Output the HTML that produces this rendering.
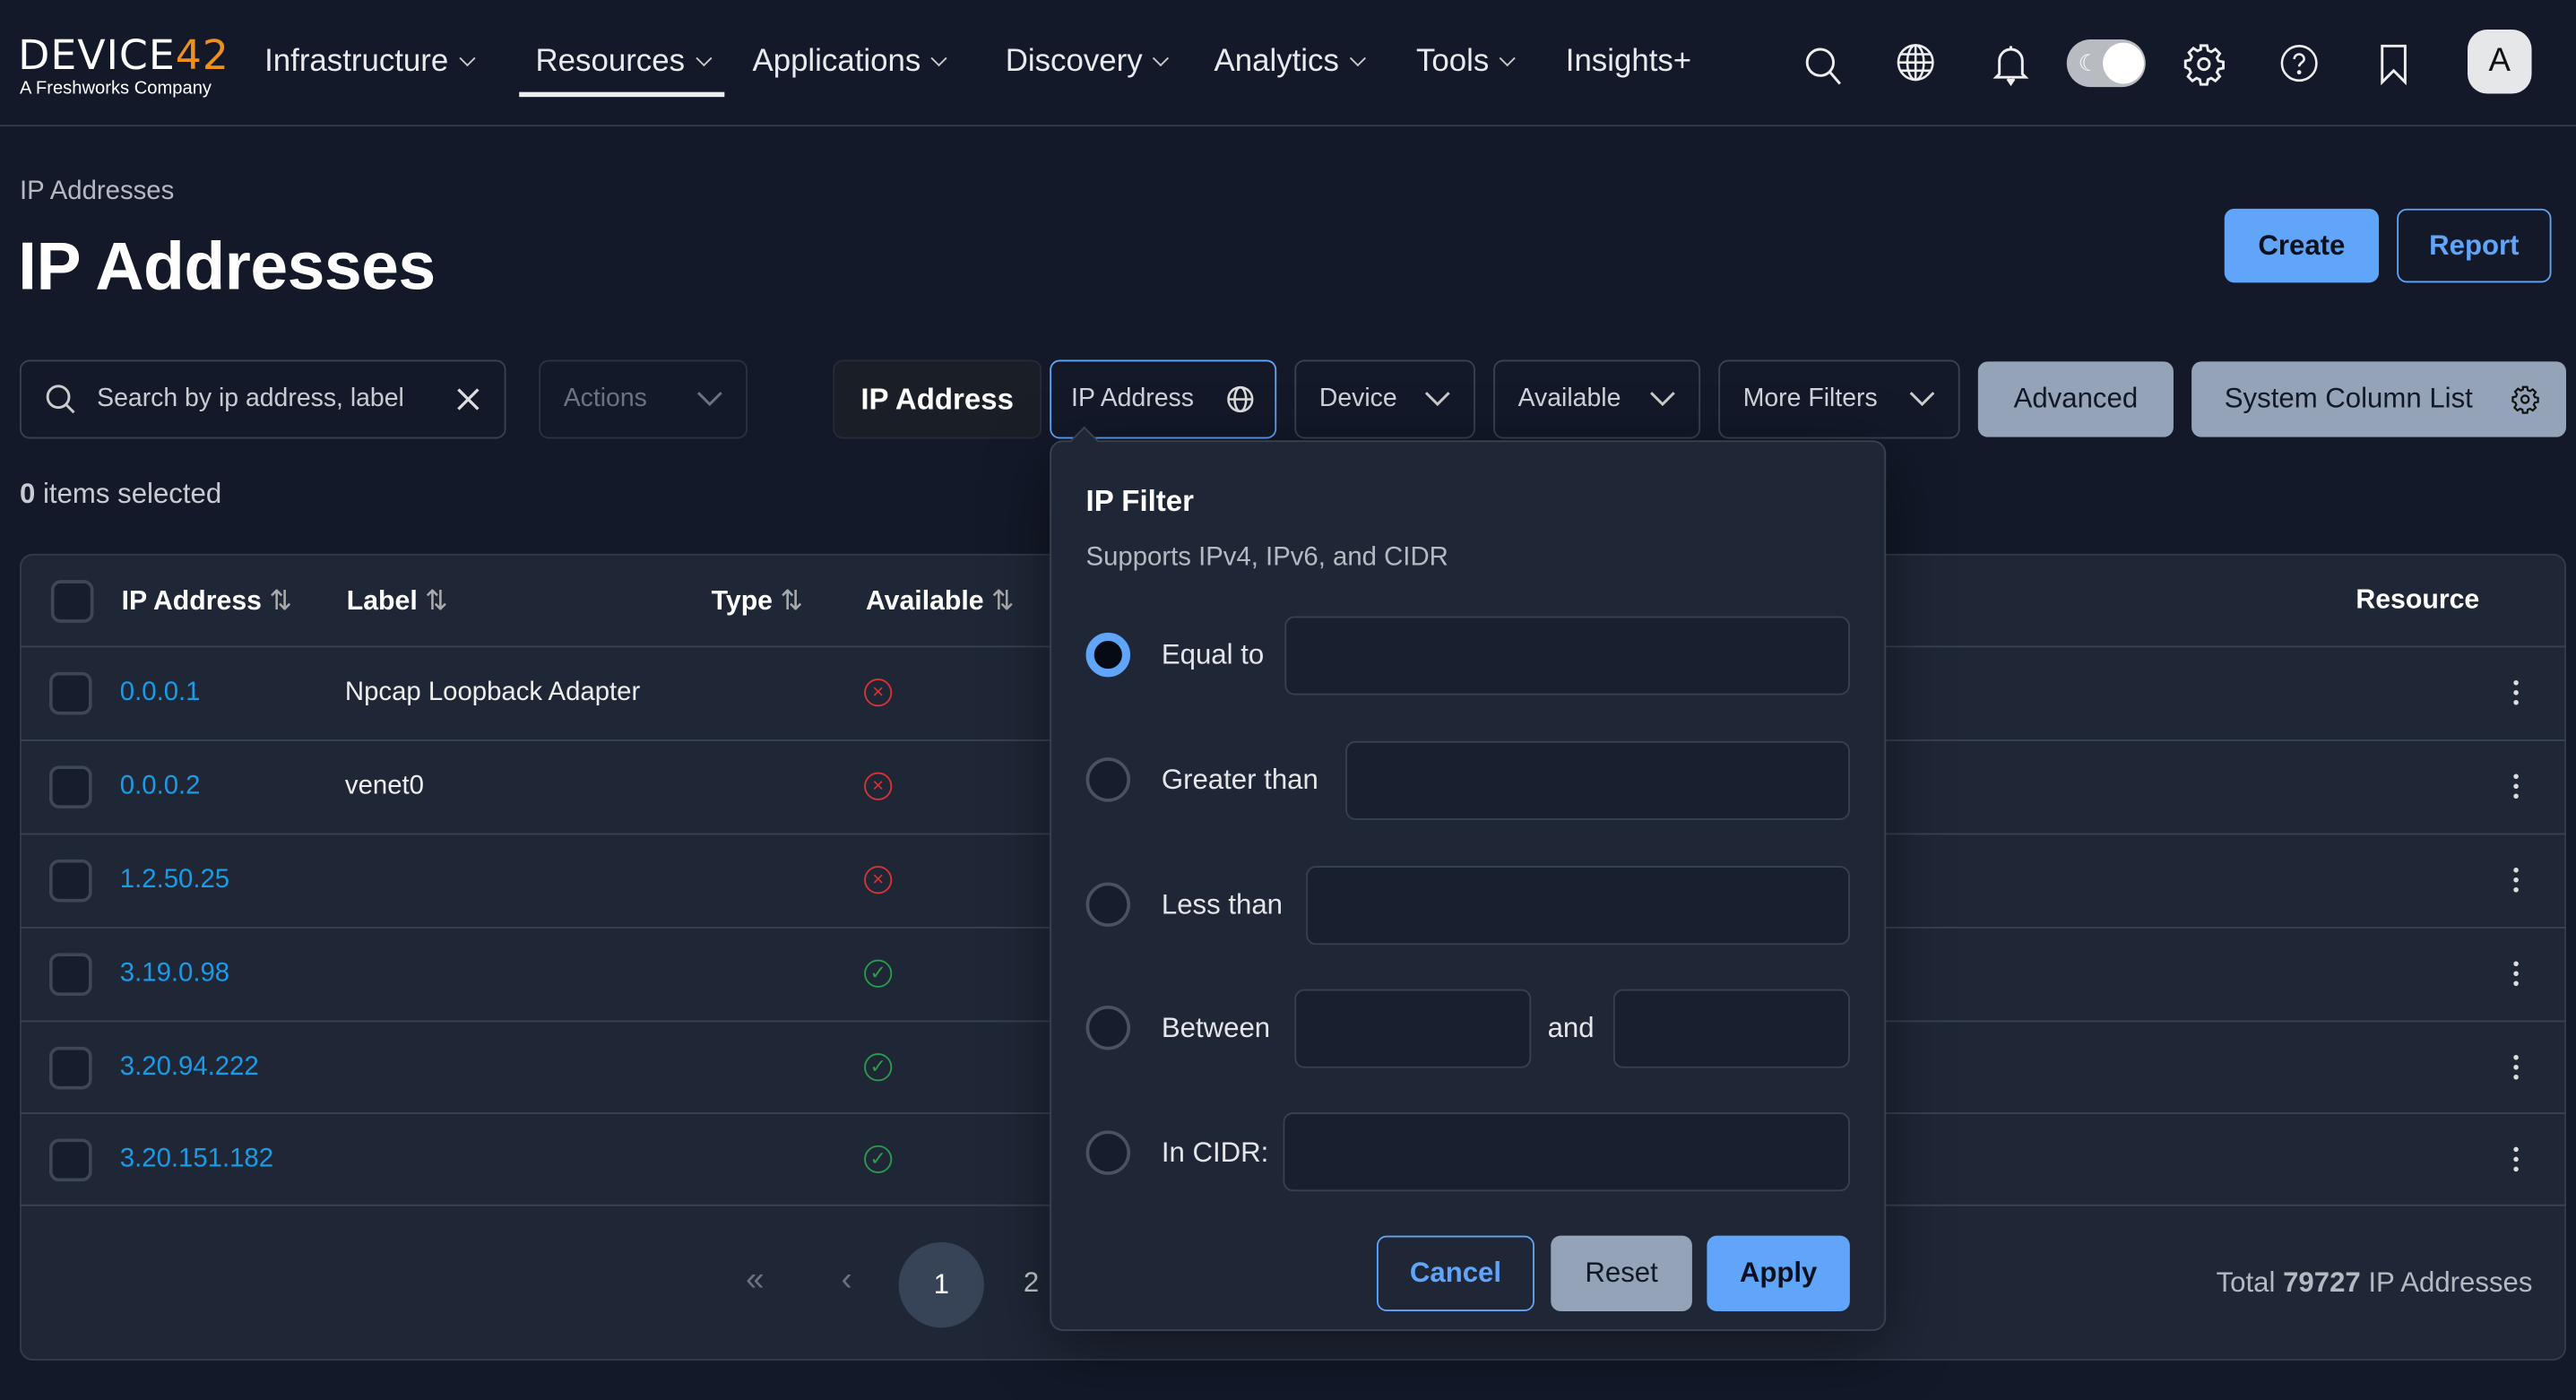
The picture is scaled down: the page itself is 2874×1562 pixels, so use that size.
<!DOCTYPE html>
<html><head><meta charset="utf-8"><style>
*{box-sizing:border-box;margin:0;padding:0}
html,body{width:2874px;height:1562px;overflow:hidden;background:#131929}
#w{position:absolute;left:0;top:0;width:1568px;height:852px;transform:scale(1.83291,1.83333);transform-origin:0 0;font-family:"Liberation Sans",sans-serif;color:#e8eaee}
.a{position:absolute;white-space:nowrap}
.nav{font-size:19px;top:27px;color:#e8eaee}
.chev{display:inline-block;width:7px;height:7px;border-right:1.6px solid #ccc;border-bottom:1.6px solid #ccc;transform:rotate(45deg);margin-left:8px;position:relative;top:-4px}
.box{position:absolute;border:1px solid #3a4252;border-radius:6px;height:48px;top:219px;font-size:15.5px;display:flex;align-items:center;justify-content:space-between;padding:0 14px;color:#d0d4da;white-space:nowrap}
.box svg{flex-shrink:0}
.btn{position:absolute;border-radius:6px;display:flex;align-items:center;justify-content:center;font-size:17px;font-weight:bold;white-space:nowrap}
.row{position:absolute;left:12px;width:1550px;height:57px;border-top:1px solid #3a4252;font-size:16px}
.cb{position:absolute;left:18px;width:26px;height:26px;border:2px solid #3f4757;border-radius:6px;background:#161d2c;top:15px}
.ip{position:absolute;left:61px;top:19px;color:#1a9be6}
.lb{position:absolute;left:198px;top:19px;color:#eee}
.st{position:absolute;left:514px;top:19px;width:17px;height:17px;border-radius:50%;border:1.5px solid #d33;color:#d33;font-size:12px;line-height:14px;text-align:center}
.ok{border-color:#2a9d4a;color:#2a9d4a}
.dots{position:absolute;left:1518px;top:20px;width:4px;font-size:0}
.dots i{display:block;width:3px;height:3px;background:#ddd;border-radius:50%;margin-bottom:3px}
.rad{position:absolute;left:21px;width:27px;height:27px;border-radius:50%;border:2px solid #4a5262;background:#161d2c}
.inp{position:absolute;height:48px;background:#181f2f;border:1px solid #394151;border-radius:6px}
.rl{position:absolute;left:67px;font-size:17px;color:#e4e6ea}
</style></head><body><div id="w">
<div class="a" style="left:0;top:76px;width:1568px;height:1px;background:#343b4a"></div>
<div class="a" style="left:11px;top:19px;font-size:25px;letter-spacing:0.5px;color:#fff;font-family:'DejaVu Sans','Liberation Sans',sans-serif">DEVICE<span style="color:#f0901c">42</span></div>
<div class="a" style="left:12px;top:48px;font-size:11px;color:#fff">A Freshworks Company</div>
<div class="a nav" style="left:161px">Infrastructure<span class="chev"></span></div>
<div class="a nav" style="left:326px">Resources<span class="chev"></span></div>
<div class="a" style="left:316px;top:56px;width:125px;height:3px;background:#eee"></div>
<div class="a nav" style="left:458px">Applications<span class="chev"></span></div>
<div class="a nav" style="left:612px">Discovery<span class="chev"></span></div>
<div class="a nav" style="left:739px">Analytics<span class="chev"></span></div>
<div class="a nav" style="left:862px">Tools<span class="chev"></span></div>
<div class="a nav" style="left:953px">Insights+</div>
<svg class="a" style="left:1096px;top:26px" width="28" height="28" viewBox="0 0 28 28" fill="none" stroke="#eee" stroke-width="1.6"><circle cx="12" cy="12" r="8"/><path d="M18 18l6 7"/></svg>
<svg class="a" style="left:1153px;top:25px" width="26" height="26" viewBox="0 0 26 26" fill="none" stroke="#eee" stroke-width="1.4"><circle cx="13" cy="13" r="10.5"/><ellipse cx="13" cy="13" rx="5" ry="10.5"/><path d="M2.5 13h21M4 8h18M4 18h18M13 2.5v21"/></svg>
<svg class="a" style="left:1212px;top:25px" width="24" height="28" viewBox="0 0 24 28" fill="none" stroke="#eee" stroke-width="1.6"><path d="M5 20V12a7 7 0 0114 0v8l2 2H3z M12 3v2"/><path d="M10 23l2 3 2-3" fill="#eee"/></svg>
<div class="a" style="left:1258px;top:24px;width:48px;height:29px;border-radius:15px;background:#b8bcc2"></div>
<div class="a" style="left:1280px;top:26px;width:25px;height:25px;border-radius:50%;background:#fff"></div>
<div class="a" style="left:1265px;top:30px;font-size:14px;color:#fff">☾</div>
<svg class="a" style="left:1328px;top:25px" width="27" height="28" viewBox="0 0 24 24" fill="none" stroke="#eee" stroke-width="1.4"><circle cx="12" cy="12" r="3"/><path d="M10.3 2h3.4l.5 2.6 1.8.8 2.2-1.5 2.4 2.4-1.5 2.2.8 1.8 2.6.5v3.4l-2.6.5-.8 1.8 1.5 2.2-2.4 2.4-2.2-1.5-1.8.8-.5 2.6h-3.4l-.5-2.6-1.8-.8-2.2 1.5-2.4-2.4 1.5-2.2-.8-1.8L2 13.7v-3.4l2.6-.5.8-1.8-1.5-2.2 2.4-2.4 2.2 1.5 1.8-.8z"/></svg>
<svg class="a" style="left:1387px;top:26px" width="25" height="25" viewBox="0 0 25 25" fill="none" stroke="#eee" stroke-width="1.4"><circle cx="12.5" cy="12.5" r="10.5"/><path d="M9.5 10a3 3 0 116 0c0 2-3 2.2-3 4.5"/><circle cx="12.5" cy="18" r=".6" fill="#eee"/></svg>
<svg class="a" style="left:1448px;top:26px" width="18" height="26" viewBox="0 0 18 26" fill="none" stroke="#eee" stroke-width="1.6"><path d="M2 2h14v22l-7-7-7 7z"/></svg>
<div class="a" style="left:1502px;top:18px;width:39px;height:39px;border-radius:12px;background:#e6e7e9;color:#111;font-size:20px;text-align:center;line-height:39px">A</div>
<div class="a" style="left:12px;top:108px;font-size:16px;color:#b4b9c2">IP Addresses</div>
<div class="a" style="left:11px;top:139px;font-size:41px;font-weight:bold;color:#fff;letter-spacing:-0.3px">IP Addresses</div>
<div class="btn" style="left:1354px;top:127px;width:94px;height:45px;background:#60a5fa;color:#0c111c">Create</div>
<div class="btn" style="left:1459px;top:127px;width:94px;height:45px;border:1.5px solid #60a5fa;color:#60a5fa">Report</div>
<div class="box" style="left:12px;width:296px;color:#c8ccd2;justify-content:flex-start"><svg width="20" height="20" viewBox="0 0 20 20" fill="none" stroke="#ccc" stroke-width="1.6"><circle cx="8.5" cy="8.5" r="6.5"/><path d="M13 13l5 5"/></svg><span style="margin-left:12px;overflow:hidden;width:215px">Search by ip address, label</span><svg style="margin-left:4px" width="14" height="14" viewBox="0 0 14 14" stroke="#ddd" stroke-width="1.8"><path d="M1 1l12 12M13 1L1 13"/></svg></div>
<div class="box" style="left:328px;width:127px;color:#6b7280;border-color:#2a3140">Actions<svg width="16" height="10" viewBox="0 0 16 10" fill="none" stroke="#6b7280" stroke-width="1.6"><path d="M1 1l7 7 7-7"/></svg></div>
<div class="box" style="left:507px;width:127px;background:#1a1e27;border-color:#262b36;color:#fff;font-size:18px;font-weight:bold;justify-content:center;padding:0">IP Address</div>
<div class="box" style="left:639px;width:138px;border:1.5px solid #60a5fa;padding:0 12px">IP Address<svg width="18" height="18" viewBox="0 0 26 26" fill="none" stroke="#ddd" stroke-width="2"><circle cx="13" cy="13" r="10.5"/><ellipse cx="13" cy="13" rx="5" ry="10.5"/><path d="M2.5 13h21"/></svg></div>
<div class="box" style="left:788px;width:110px">Device<svg width="16" height="10" viewBox="0 0 16 10" fill="none" stroke="#ccc" stroke-width="1.6"><path d="M1 1l7 7 7-7"/></svg></div>
<div class="box" style="left:909px;width:126px">Available<svg width="16" height="10" viewBox="0 0 16 10" fill="none" stroke="#ccc" stroke-width="1.6"><path d="M1 1l7 7 7-7"/></svg></div>
<div class="box" style="left:1046px;width:147px">More Filters<svg width="16" height="10" viewBox="0 0 16 10" fill="none" stroke="#ccc" stroke-width="1.6"><path d="M1 1l7 7 7-7"/></svg></div>
<div class="btn" style="left:1204px;top:220px;width:119px;height:46px;background:#94a3b8;color:#111827;font-weight:normal">Advanced</div>
<div class="btn" style="left:1334px;top:220px;width:228px;height:46px;background:#94a3b8;color:#111827;font-weight:normal;justify-content:space-between;padding:0 16px 0 20px">System Column List<svg width="18" height="18" viewBox="0 0 24 24" fill="none" stroke="#111" stroke-width="1.6"><circle cx="12" cy="12" r="3"/><path d="M10.3 2h3.4l.5 2.6 1.8.8 2.2-1.5 2.4 2.4-1.5 2.2.8 1.8 2.6.5v3.4l-2.6.5-.8 1.8 1.5 2.2-2.4 2.4-2.2-1.5-1.8.8-.5 2.6h-3.4l-.5-2.6-1.8-.8-2.2 1.5-2.4-2.4 1.5-2.2-.8-1.8L2 13.7v-3.4l2.6-.5.8-1.8-1.5-2.2 2.4-2.4 2.2 1.5 1.8-.8z"/></svg></div>
<div class="a" style="left:12px;top:291px;font-size:17px;color:#c8ccd2"><b>0</b> items selected</div>
<div class="a" style="left:12px;top:337px;width:1550px;height:491px;background:#1f2737;border:1px solid #343c4c;border-radius:8px;overflow:hidden">
<div class="a" style="left:0;top:0;width:1550px;height:56px;font-size:16.5px;font-weight:bold;color:#fff">
<div class="cb" style="top:15px"></div>
<div class="a" style="left:61px;top:18px">IP Address <span style="font-weight:normal;color:#aaa">⇅</span></div>
<div class="a" style="left:198px;top:18px">Label <span style="font-weight:normal;color:#aaa">⇅</span></div>
<div class="a" style="left:420px;top:18px">Type <span style="font-weight:normal;color:#aaa">⇅</span></div>
<div class="a" style="left:514px;top:18px">Available <span style="font-weight:normal;color:#aaa">⇅</span></div>
<div class="a" style="left:1421px;top:18px">Resource</div>
</div>
</div>
<div class="row" style="top:393px"><div class="cb"></div><div class="ip">0.0.0.1</div><div class="lb">Npcap Loopback Adapter</div><div class="st">×</div><div class="dots"><i></i><i></i><i></i></div></div>
<div class="row" style="top:450px"><div class="cb"></div><div class="ip">0.0.0.2</div><div class="lb">venet0</div><div class="st">×</div><div class="dots"><i></i><i></i><i></i></div></div>
<div class="row" style="top:507px"><div class="cb"></div><div class="ip">1.2.50.25</div><div class="st">×</div><div class="dots"><i></i><i></i><i></i></div></div>
<div class="row" style="top:564px"><div class="cb"></div><div class="ip">3.19.0.98</div><div class="st ok">✓</div><div class="dots"><i></i><i></i><i></i></div></div>
<div class="row" style="top:621px"><div class="cb"></div><div class="ip">3.20.94.222</div><div class="st ok">✓</div><div class="dots"><i></i><i></i><i></i></div></div>
<div class="row" style="top:677px"><div class="cb"></div><div class="ip">3.20.151.182</div><div class="st ok">✓</div><div class="dots"><i></i><i></i><i></i></div></div>
<div class="row" style="top:733px;height:1px;background:#3a4252"></div>
<div class="a" style="left:454px;top:768px;font-size:20px;color:#6b7280">«</div>
<div class="a" style="left:512px;top:768px;font-size:20px;color:#6b7280">‹</div>
<div class="a" style="left:547px;top:756px;width:52px;height:52px;border-radius:50%;background:#374357;color:#fff;font-size:17px;text-align:center;line-height:52px">1</div>
<div class="a" style="left:623px;top:771px;font-size:17px;color:#ccc">2</div>
<div class="a" style="left:1349px;top:771px;font-size:17px;color:#b4b9c2">Total <b>79727</b> IP Addresses</div>
<div class="a" style="left:639px;top:268px;width:509px;height:542px;background:#1f2737;border:1px solid #3a4252;border-radius:8px;box-shadow:0 10px 40px rgba(0,0,0,.45)">
<div class="a" style="left:14px;top:-7px;width:12px;height:12px;background:#1f2737;border-left:1px solid #3a4252;border-top:1px solid #3a4252;transform:rotate(45deg)"></div>
<div class="a" style="left:21px;top:26px;font-size:18px;font-weight:bold;color:#fff">IP Filter</div>
<div class="a" style="left:21px;top:62px;font-size:16px;color:#b4b9c2">Supports IPv4, IPv6, and CIDR</div>
<div class="rad" style="top:116px;border:5px solid #60a5fa;background:#050a14"></div>
<div class="rl" style="top:120px">Equal to</div><div class="inp" style="left:142px;top:106px;width:344px"></div>
<div class="rad" style="top:192px"></div>
<div class="rl" style="top:196px">Greater than</div><div class="inp" style="left:179px;top:182px;width:307px"></div>
<div class="rad" style="top:268px"></div>
<div class="rl" style="top:272px">Less than</div><div class="inp" style="left:155px;top:258px;width:331px"></div>
<div class="rad" style="top:343px"></div>
<div class="rl" style="top:347px">Between</div><div class="inp" style="left:148px;top:333px;width:144px"></div>
<div class="rl" style="left:302px;top:347px">and</div><div class="inp" style="left:342px;top:333px;width:144px"></div>
<div class="rad" style="top:419px"></div>
<div class="rl" style="top:423px">In CIDR:</div><div class="inp" style="left:141px;top:408px;width:345px"></div>
<div class="btn" style="left:198px;top:483px;width:96px;height:46px;border:1.5px solid #60a5fa;color:#60a5fa">Cancel</div>
<div class="btn" style="left:304px;top:483px;width:86px;height:46px;background:#94a3b8;color:#111827;font-weight:normal">Reset</div>
<div class="btn" style="left:399px;top:483px;width:87px;height:46px;background:#60a5fa;color:#0c111c">Apply</div>
</div>
</div></body></html>
